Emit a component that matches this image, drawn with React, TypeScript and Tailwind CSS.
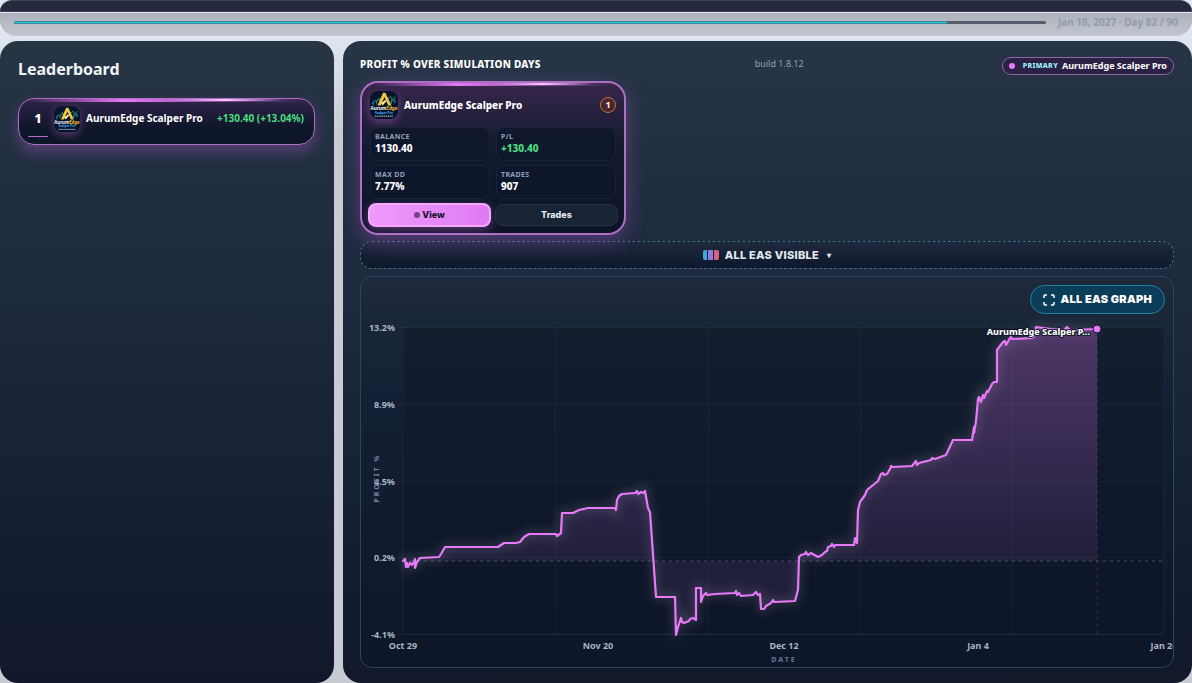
import { useState } from 'react';

const PINK = '#e879f9';

interface Stat {
  label: string;
  value: string;
  positive?: boolean;
}

const EA_NAME = 'AurumEdge Scalper Pro';

const stats: Stat[] = [
  { label: 'BALANCE', value: '1130.40' },
  { label: 'P/L', value: '+130.40', positive: true },
  { label: 'MAX DD', value: '7.77%' },
  { label: 'TRADES', value: '907' },
];

const yTicks = [
  { label: '13.2%', y: 50 },
  { label: '8.9%', y: 127 },
  { label: '4.5%', y: 204 },
  { label: '0.2%', y: 280 },
  { label: '-4.1%', y: 357 },
];

const xTicks = [
  { label: 'Oct 29', x: 42 },
  { label: 'Nov 20', x: 237 },
  { label: 'Dec 12', x: 423 },
  { label: 'Jan 4', x: 617 },
  { label: 'Jan 26', x: 803 },
];

const gridX = [194, 347, 499, 651];

// equity curve, in chart units
const curve =
  '42,284 44,282 45,290 46,286 47,290 49,286 51,288 53,285 54,282 54,291 56,285 59,281 78,280 80,277 84,270 137,270 143,266 155,266 159,265 163,260 168,257 195,257 196,259 200,256 201,236 212,236 218,233 227,231 254,231 255,233 256,223 258,219 261,217 274,216 276,214 277,217 280,215 283,216 284,214 287,231 289,235 295,320 314,320 315,358 317,350 320,341 321,345 323,346 328,344 329,342 332,341 335,343 335,311 340,311 340,325 342,319 345,316 346,318 354,317 374,316 375,314 376,318 378,316 380,319 392,318 395,315 397,318 399,317 400,332 403,332 405,329 410,326 412,323 413,325 434,324 437,313 438,280 440,278 444,277 445,275 447,278 450,276 457,280 461,278 464,275 466,274 467,270 470,269 471,267 473,270 474,268 493,268 494,261 496,266 497,233 499,225 504,218 506,213 517,204 520,197 522,196 523,198 526,197 529,192 530,189 532,190 551,189 555,184 556,188 558,186 570,183 571,181 574,182 585,178 592,163 611,163 613,150 613,156 615,144 617,122 618,120 620,125 622,118 623,121 626,114 627,115 631,107 633,105 636,105 636,73 642,65 644,64 645,68 649,61 650,60 651,62 671,61 673,60 675,50 690,52 703,53 706,50 709,53 736,52';

function Logo({ className }: { className: string }) {
  return (
    <svg viewBox="0 0 60 60" className={className} aria-hidden="true">
      <rect width="60" height="60" rx="16" fill="#06152b" />
      <path d="M4 28l6-8 4 4 5-9 5 12M37 18l7-6 4 6 6-6M44 26l5-7 6 5" fill="none" stroke="#2d9c72" strokeWidth="2" />
      <path d="M7 23v8M14 20v9M46 18v10M53 16v10" stroke="#2481a3" strokeWidth="2" />
      <path d="M16 31L28 4h5l13 27h-7L31 13 23 31z" fill="#f5c542" />
      <path d="M24 26l9-7 2 3-8 9z" fill="#fff0a0" />
      <text x="30" y="41" textAnchor="middle" fontSize="10" fontWeight="700" fill="#f8fafc">
        Aurum<tspan fill="#f5b92e">Edge</tspan>
      </text>
      <text x="30" y="49" textAnchor="middle" fontSize="7" fontWeight="700" fill="#49a9ee">Scalper Pro</text>
      <path d="M10 54h40" stroke="#c7d2dd" strokeWidth="2" strokeDasharray="3 1" />
    </svg>
  );
}

function Leaderboard() {
  return (
    <aside className="w-[334px] shrink-0 rounded-[18px] bg-linear-to-b from-[#283545] via-[#1e2a3e] via-35% to-[#11182b] pr-[19px] pl-[18px] pt-4">
      <h2 className="text-base leading-6 font-bold text-slate-100">Leaderboard</h2>
      <div className="relative mt-[17px] flex h-[47px] items-center rounded-2xl border border-[#b36cc7] bg-linear-to-b from-[#30244a] to-[#0e1629] to-65% pr-2.5 pb-1.5 pl-[9px] shadow-[0_8px_14px_rgba(192,100,220,0.3)]">
        <div className="absolute inset-x-2 top-0 h-[3px] rounded-full bg-linear-to-r from-transparent via-[#e879f9] via-35% to-transparent" />
        <div className="absolute top-0 right-8 left-1/2 h-[2px] bg-linear-to-r from-transparent via-[#fbc8ff] to-transparent" />
        <div className="w-5 text-center text-[13px] font-extrabold text-white">1</div>
        <div className="absolute bottom-[7px] left-[9px] h-px w-5 bg-[#b36cc7]" />
        <Logo className="ml-1.5 size-[26px] rounded-lg shadow-[0_3px_8px_rgba(232,121,249,0.35)]" />
        <span className="ml-1.5 text-[10px] font-bold whitespace-nowrap text-white">{EA_NAME}</span>
        <span className="ml-auto text-[10px] font-bold whitespace-nowrap text-[#4ade80]">+130.40 (+13.04%)</span>
      </div>
    </aside>
  );
}

function EaCard() {
  const [viewing, setViewing] = useState(true);

  return (
    <div className="relative w-[266px] rounded-[18px] border-2 border-[#ad70c3] bg-linear-to-b from-[#37264b] via-[#111a2f] via-45% to-[#0d1428] px-1.5 pt-2 pb-1.5 shadow-[0_6px_20px_rgba(190,90,220,0.35)]">
      <div className="absolute inset-x-3 top-0 h-[3px] bg-linear-to-r from-transparent via-[#e879f9] via-35% to-transparent" />
      <div className="absolute top-0 right-8 left-1/2 h-[2px] bg-linear-to-r from-transparent via-[#fbc8ff] to-transparent" />
      <div className="flex h-7 items-center px-0.5">
        <Logo className="size-7 rounded-lg shadow-[0_3px_8px_rgba(232,121,249,0.35)]" />
        <span className="ml-1.5 text-[10px] font-extrabold text-white">{EA_NAME}</span>
        <span className="ml-auto flex size-4 items-center justify-center rounded-full border border-[#b57b31] bg-[#4d2530] text-[8px] font-extrabold text-amber-100">1</span>
      </div>
      <dl className="mt-2 grid grid-cols-2 gap-x-1.5 gap-y-1 px-0.5">
        {stats.map((stat) => (
          <div key={stat.label} className="h-[34px] rounded-lg border border-[#18233a] bg-[#0e172a]/80 px-1 pt-1">
            <dt className="text-[7px] leading-[10px] font-bold tracking-wider text-slate-400">{stat.label}</dt>
            <dd className={`text-[10px] leading-[13px] font-extrabold ${stat.positive ? 'text-[#4ade80]' : 'text-white'}`}>{stat.value}</dd>
          </div>
        ))}
      </dl>
      <div className="mt-1 grid grid-cols-2 gap-1 font-['Inter',sans-serif] text-[9px]">
        <button
          onClick={() => setViewing(!viewing)}
          aria-pressed={viewing}
          className="flex h-6 items-center justify-center gap-0.5 rounded-lg border-2 border-[#f5a9ff] bg-linear-to-r from-[#ee99fb] to-[#e07bf3] font-extrabold text-[#18142a] shadow-[0_3px_10px_rgba(232,121,249,0.35)]"
        >
          <span className="size-1.5 rounded-full bg-[#704681]" />
          View
        </button>
        <button className="my-px rounded-lg border border-[#263246] bg-[#182335] font-extrabold text-slate-200">Trades</button>
      </div>
    </div>
  );
}

function ProfitChart() {
  return (
    <svg viewBox="0 0 812 390" className="block h-auto w-full" role="img" aria-label="Profit % by date">
      <defs>
        <linearGradient id="area" x1="0" y1="50" x2="0" y2="284" gradientUnits="userSpaceOnUse">
          <stop offset="0" stopColor={PINK} stopOpacity="0.28" />
          <stop offset="1" stopColor={PINK} stopOpacity="0.08" />
        </linearGradient>
        <linearGradient id="plot" x1="0" y1="0" x2="0" y2="1">
          <stop offset="0" stopColor="#131e2f" />
          <stop offset="1" stopColor="#0d1528" />
        </linearGradient>
        <filter id="glow" x="-10%" y="-10%" width="120%" height="120%">
          <feGaussianBlur stdDeviation="5" />
        </filter>
      </defs>
      <rect x="42" y="50" width="761" height="307" rx="4" fill="url(#plot)" stroke="#1a2638" />
      {yTicks.map((tick) => (
        <g key={tick.label}>
          <path d={`M37 ${tick.y}.5H803`} stroke="#94a3b8" strokeOpacity="0.07" />
          <text x="34" y={tick.y + 4} textAnchor="end" fontSize="9" fontWeight="700" fill="#a8b3c5">{tick.label}</text>
        </g>
      ))}
      {gridX.map((x) => (
        <path key={x} d={`M${x}.5 50V357`} stroke="#94a3b8" strokeOpacity="0.06" />
      ))}
      <polyline points={curve} fill="none" stroke="#a8a4b4" strokeOpacity="0.2" strokeWidth="7" filter="url(#glow)" />
      <polygon points={`42,284 ${curve} 736,284`} fill="url(#area)" />
      <path d="M42 284H803" stroke="#64748b" strokeOpacity="0.6" strokeDasharray="3 4" />
      <path d="M736 53V357" stroke={PINK} strokeOpacity="0.2" strokeDasharray="3 4" />
      <polyline points={curve} fill="none" stroke={PINK} strokeWidth="2.2" strokeLinejoin="round" strokeLinecap="round" />
      <circle cx="736" cy="52" r="4" fill={PINK} stroke="#0f172a" />
      <text x="729" y="58" textAnchor="end" fontSize="9" fontWeight="800" fill="#fff" stroke="#0f172a" strokeWidth="2" paintOrder="stroke">
        AurumEdge Scalper P...
      </text>
      {xTicks.map((tick) => (
        <text key={tick.label} x={tick.x} y="372" textAnchor="middle" fontSize="9" fontWeight="700" fill="#a8b3c5">{tick.label}</text>
      ))}
      <text x="423" y="385" textAnchor="middle" fontSize="7" fontWeight="800" letterSpacing="2" fill="#64748b">DATE</text>
      <text transform="translate(18 201) rotate(-90)" textAnchor="middle" fontSize="7" fontWeight="700" letterSpacing="2" fill="#77849a">PROFIT %</text>
    </svg>
  );
}

export default function App() {
  return (
    <div className="flex min-h-screen flex-col bg-linear-to-b from-[#e0e7f2] from-5% to-[#c8ccd2] to-20% font-['Noto_Sans',sans-serif]">
      <header className="h-3 rounded-t-xl border-y border-[#3b4256] bg-[#25293d]" />
      <div className="mt-px flex h-[23px] items-center gap-3 rounded-b-2xl bg-linear-to-b from-[#aeb3ba] to-[#c1c6d0] px-3.5 pb-1">
        <div className="h-[3px] flex-1 overflow-hidden rounded-full bg-[#555d6d]">
          <div className="h-full w-[90.4%] border-y border-[#3b879b] bg-[#29c7de]" />
        </div>
        <span className="text-[10px] font-bold whitespace-nowrap text-[#929bad]">Jan 18, 2027 · Day 82 / 90</span>
      </div>

      <main className="mt-[5px] flex flex-1 gap-[9px]">
        <Leaderboard />

        <section className="min-w-0 flex-1 rounded-[18px] bg-linear-to-b from-[#273546] via-[#1e2a3e] via-35% to-[#11192b] pr-[18px] pl-[17px] pt-4 pb-[15px]">
          <div className="flex h-[18px] items-start justify-between">
            <h2 className="text-[10px] leading-[14px] font-extrabold tracking-wide text-white">PROFIT % OVER SIMULATION DAYS</h2>
            <span className="ml-4 text-[9px] leading-[14px] text-slate-400">build 1.8.12</span>
            <div className="flex h-[18px] items-center rounded-full border border-[#8f65a8] bg-[#2b2145] px-1.5">
              <span className="size-1.5 rounded-full bg-[#e879f9]" />
              <span className="ml-2 text-[7px] font-extrabold tracking-wider text-cyan-200">PRIMARY</span>
              <span className="ml-1 text-[9px] font-bold text-white">{EA_NAME}</span>
            </div>
          </div>

          <div className="mt-1.5">
            <EaCard />
          </div>

          <button className="mt-1.5 flex h-7 w-full items-center justify-center gap-1.5 rounded-xl border border-dashed border-[#446b83] bg-linear-to-b from-[#20283e]/50 to-[#0e182c] font-['Inter',sans-serif] text-[11px] font-extrabold tracking-wide text-slate-200">
            <span className="flex h-2.5 w-4 gap-px">
              <span className="flex-1 rounded-l-xs bg-[#38a9dc]" />
              <span className="flex-1 bg-[#9278df]" />
              <span className="flex-1 rounded-r-xs bg-[#d7607d]" />
            </span>
            ALL EAS VISIBLE
            <span className="ml-0.5 text-[8px]">▾</span>
          </button>

          <div className="relative mt-[7px] overflow-hidden rounded-xl border border-[#2a465e] bg-linear-to-b from-[#1e2a3b] via-[#142035] via-30% to-[#0e1629]">
            <ProfitChart />
            <button className="absolute top-2 right-2 flex h-[29px] items-center gap-1.5 rounded-full border border-[#247fa5] bg-[#0b3c58] px-3 font-['Inter',sans-serif] text-[11px] font-black tracking-wide text-white">
              <svg viewBox="0 0 12 12" className="size-3" fill="none" stroke="currentColor" strokeWidth="1.5" aria-hidden="true">
                <path d="M1 4V2q0-1 1-1h2M8 1h2q1 0 1 1v2M11 8v2q0 1-1 1H8M4 11H2q-1 0-1-1V8" />
              </svg>
              ALL EAS GRAPH
            </button>
          </div>
        </section>
      </main>
    </div>
  );
}
